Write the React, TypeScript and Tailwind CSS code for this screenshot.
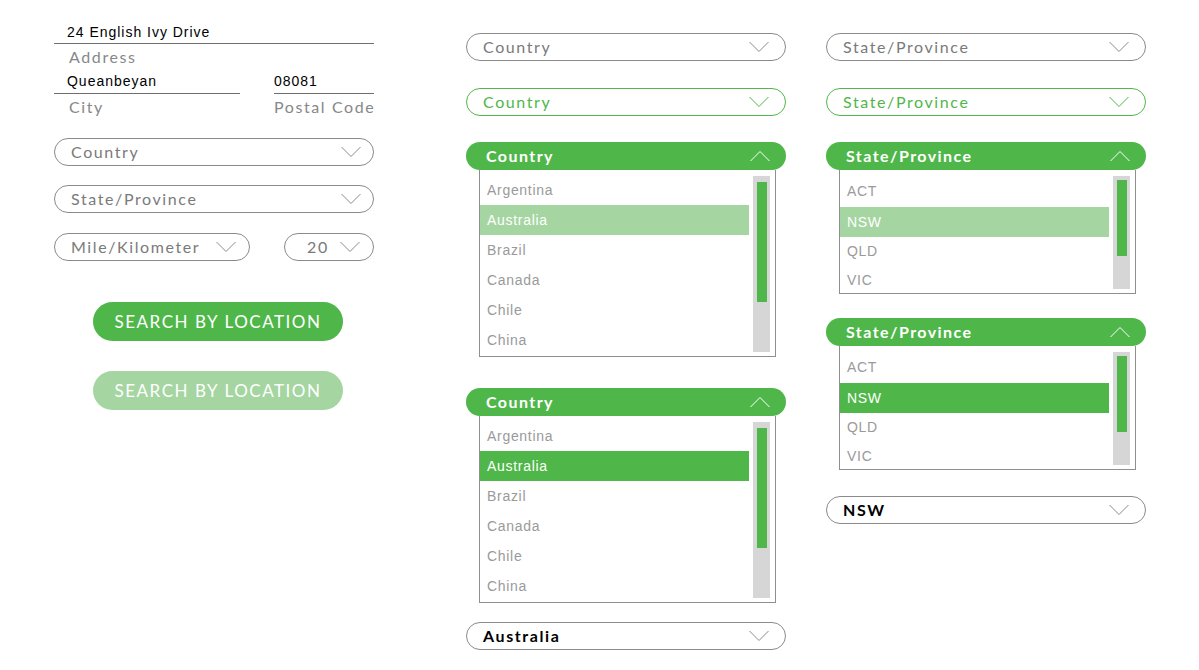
import React from "react";

const GREEN = "#4fb749";

function Chevron({ up = false, color = "#8a8a8a" }: { up?: boolean; color?: string }) {
  return (
    <svg width="20" height="12" viewBox="0 0 20 12" className="shrink-0">
      <polyline
        points={up ? "0.5,11 10,1.5 19.5,11" : "0.5,1 10,10.5 19.5,1"}
        fill="none"
        stroke={color}
        strokeWidth="1"
      />
    </svg>
  );
}

type SelectProps = {
  label: string;
  variant?: "default" | "focus" | "value";
  pr?: string;
  className?: string;
};

function Select({ label, variant = "default", pr = "pr-[16px]", className = "" }: SelectProps) {
  const border =
    variant === "focus" ? "border-[#4fb749]" : "border-[#8a8a8a]";
  const text =
    variant === "focus"
      ? "text-[#4fb749]"
      : variant === "value"
        ? "text-black font-bold"
        : "text-[#7a7a7a]";
  return (
    <div
      className={`flex h-[28px] items-center justify-between rounded-full border ${border} pl-[16px] ${pr} ${className}`}
    >
      <span className={`label-font whitespace-nowrap text-[16px] leading-none tracking-[0.1em] ${text}`}>
        {label}
      </span>
      <Chevron color={variant === "focus" ? GREEN : "#8a8a8a"} />
    </div>
  );
}

function OpenHeader({ label }: { label: string }) {
  return (
    <div className="relative z-10 flex h-[28px] items-center justify-between rounded-full bg-[#4fb749] pl-[20px] pr-[16px]">
      <span className="label-font whitespace-nowrap text-[16px] font-bold leading-none tracking-[0.09em] text-white">
        {label}
      </span>
      <Chevron up color="#ffffff" />
    </div>
  );
}

type Row = { label: string; h: string; selected?: boolean };

function OptionList({
  rows,
  height,
  selectedColor,
  trackH,
  thumbTop,
  thumbH,
}: {
  rows: Row[];
  height: string;
  selectedColor: string;
  trackH: string;
  thumbTop: string;
  thumbH: string;
}) {
  return (
    <div className={`ml-[13px] mr-[10px] flex ${height} overflow-hidden border border-t-0 border-[#8f8f8f] bg-white`}>
      <div className="flex w-[269px] flex-col pt-[5px]">
        {rows.map((r) => (
          <div
            key={r.label}
            className={`flex ${r.h} shrink-0 items-center pl-[7px] text-[14px] tracking-[0.05em] ${
              r.selected ? `${selectedColor} text-white` : "text-[#9a9a9a]"
            }`}
            style={{ fontFamily: '"Liberation Sans", Arial, sans-serif' }}
          >
            {r.label}
          </div>
        ))}
      </div>
      <div className={`ml-[4px] mt-[6px] w-[17px] ${trackH} bg-[#d6d6d6] pl-[4px]`}>
        <div className={`${thumbTop} ${thumbH} w-[10px] bg-[#4fb749]`} />
      </div>
    </div>
  );
}

const countryRows = (sel: boolean): Row[] => [
  { label: "Argentina", h: "h-[30px]" },
  { label: "Australia", h: "h-[30px]", selected: sel },
  { label: "Brazil", h: "h-[30px]" },
  { label: "Canada", h: "h-[30px]" },
  { label: "Chile", h: "h-[30px]" },
  { label: "China", h: "h-[30px]" },
];

const stateRows: Row[] = [
  { label: "ACT", h: "h-[32px]" },
  { label: "NSW", h: "h-[30px]", selected: true },
  { label: "QLD", h: "h-[28px]" },
  { label: "VIC", h: "h-[30px]" },
];

const inputFont = { fontFamily: '"Liberation Sans", Arial, sans-serif' };

export default function App() {
  return (
    <div className="relative h-[670px] w-[1199px] overflow-hidden bg-white">
      <style>{`.label-font{font-family:Lato,"Noto Sans",sans-serif}`}</style>
      <div className="flex">
        {/* left column */}
        <div className="ml-[54px] flex w-[320px] flex-col pt-[22px]">
          <div
            className="h-[22px] whitespace-nowrap border-b border-[#6f6f6f] pl-[13px] text-[14px] leading-[20px] tracking-[0.07em] text-black"
            style={inputFont}
          >
            24 English Ivy Drive
          </div>
          <div className="label-font h-[26px] whitespace-nowrap pl-[15px] text-[16px] leading-[25px] tracking-[0.1em] text-[#888]">
            Address
          </div>
          <div className="flex justify-between">
            <div className="w-[186px]">
              <div
                className="h-[24px] whitespace-nowrap border-b border-[#6f6f6f] pl-[13px] text-[14px] leading-[22px] tracking-[0.07em] text-black"
                style={inputFont}
              >
                Queanbeyan
              </div>
              <div className="label-font h-[26px] whitespace-nowrap pl-[15px] text-[16px] leading-[26px] tracking-[0.1em] text-[#888]">
                City
              </div>
            </div>
            <div className="w-[100px]">
              <div
                className="h-[24px] whitespace-nowrap border-b border-[#6f6f6f] text-[14px] leading-[22px] tracking-[0.07em] text-black"
                style={inputFont}
              >
                08081
              </div>
              <div className="label-font h-[26px] whitespace-nowrap text-[16px] leading-[26px] tracking-[0.1em] text-[#888]">
                Postal Code
              </div>
            </div>
          </div>
          <Select label="Country" pr="pr-[12px]" className="mt-[18px]" />
          <Select label="State/Province" pr="pr-[12px]" className="mt-[19px]" />
          <div className="mt-[20px] flex justify-between">
            <Select label="Mile/Kilometer" pr="pr-[13px]" className="w-[196px]" />
            <div className="flex h-[28px] w-[90px] items-center justify-between rounded-full border border-[#8a8a8a] pl-[22px] pr-[13px]">
              <span className="label-font text-[16px] leading-none tracking-[0.1em] text-[#7a7a7a]">20</span>
              <Chevron />
            </div>
          </div>
          <button className="label-font ml-[39px] mt-[41px] flex h-[39px] w-[250px] items-center justify-center whitespace-nowrap rounded-full bg-[#4fb749] text-[17px] tracking-[0.09em] text-white">
            SEARCH BY LOCATION
          </button>
          <button className="label-font ml-[39px] mt-[30px] flex h-[39px] w-[250px] items-center justify-center whitespace-nowrap rounded-full bg-[#a5d5a1] text-[17px] tracking-[0.09em] text-white">
            SEARCH BY LOCATION
          </button>
        </div>

        {/* middle column */}
        <div className="ml-[92px] flex w-[320px] flex-col pt-[33px]">
          <Select label="Country" />
          <Select label="Country" variant="focus" className="mt-[27px]" />
          <div className="mt-[26px]">
            <OpenHeader label="Country" />
            <OptionList
              rows={countryRows(true)}
              height="h-[187px]"
              selectedColor="bg-[#a5d5a1]"
              trackH="h-[176px]"
              thumbTop="mt-[6px]"
              thumbH="h-[120px]"
            />
          </div>
          <div className="mt-[31px]">
            <OpenHeader label="Country" />
            <OptionList
              rows={countryRows(true)}
              height="h-[187px]"
              selectedColor="bg-[#4fb749]"
              trackH="h-[176px]"
              thumbTop="mt-[6px]"
              thumbH="h-[120px]"
            />
          </div>
          <Select label="Australia" variant="value" className="mt-[19px]" />
        </div>

        {/* right column */}
        <div className="ml-[40px] flex w-[320px] flex-col pt-[33px]">
          <Select label="State/Province" />
          <Select label="State/Province" variant="focus" className="mt-[27px]" />
          <div className="mt-[26px]">
            <OpenHeader label="State/Province" />
            <OptionList
              rows={stateRows}
              height="h-[124px]"
              selectedColor="bg-[#a5d5a1]"
              trackH="h-[113px]"
              thumbTop="mt-[4px]"
              thumbH="h-[76px]"
            />
          </div>
          <div className="mt-[24px]">
            <OpenHeader label="State/Province" />
            <OptionList
              rows={stateRows}
              height="h-[124px]"
              selectedColor="bg-[#4fb749]"
              trackH="h-[113px]"
              thumbTop="mt-[4px]"
              thumbH="h-[76px]"
            />
          </div>
          <Select label="NSW" variant="value" className="mt-[26px]" />
        </div>
      </div>
    </div>
  );
}
